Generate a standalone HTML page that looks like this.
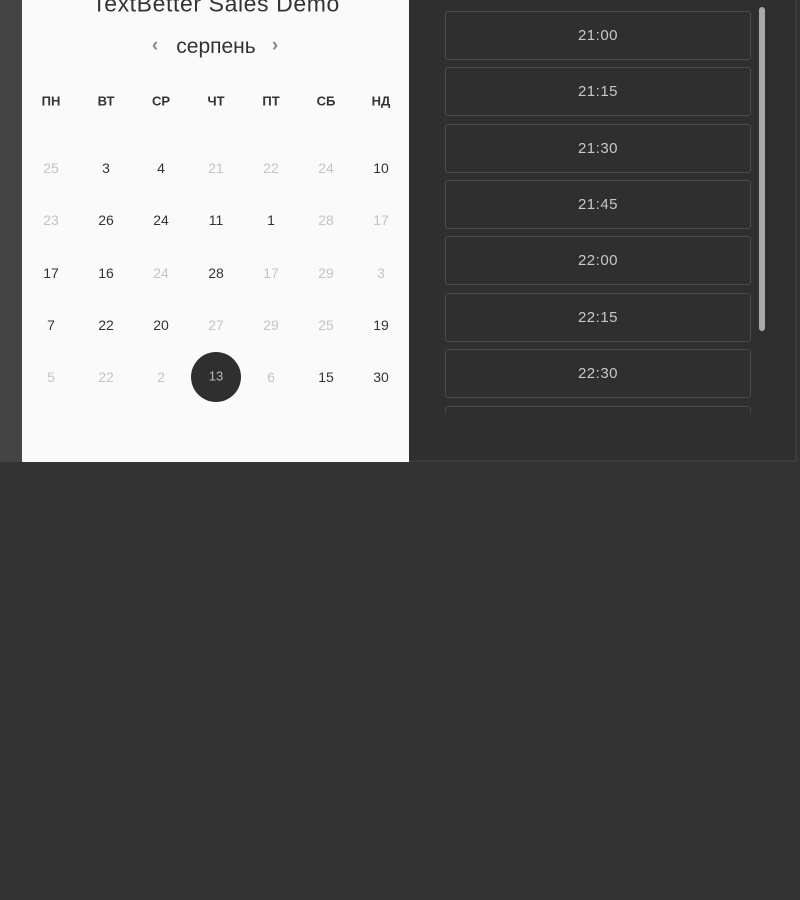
<!DOCTYPE html>
<html><head><meta charset="utf-8"><style>
*{margin:0;padding:0;box-sizing:border-box}
html,body{width:800px;height:900px;background:#333;overflow:hidden;font-family:"Liberation Sans",sans-serif}
.strip{position:absolute;left:0;top:0;width:22px;height:462px;background:#444}
.cal{position:absolute;left:22px;top:0;width:387px;height:462px;background:#fafafa}
.right{position:absolute;left:409px;top:0;width:388px;height:462px;background:#2f2f2f;border-right:2px solid #3a3a3a;border-bottom:2px solid #3a3a3a}
.t{position:absolute;transform:translate(-50%,-50%);white-space:nowrap}
.title{left:216px;top:4px;font-size:23px;color:#333;letter-spacing:.6px}
.month{left:216px;top:47px;font-size:21px;color:#333}
.arr{font-size:19px;color:#888;font-weight:bold}
.wd{font-size:13px;font-weight:bold;color:#333;top:101px}
.d{font-size:14px;color:#333}
.g{color:#c4c4c4}
.sel{position:absolute;left:191px;top:352px;width:50px;height:50px;border-radius:50%;background:#2f2f2f}
.btn{position:absolute;left:445px;width:306px;height:49px;border:1px solid #4a4a4a;border-radius:3px;color:#c8c8c8;font-size:15px;text-align:center;line-height:47px;letter-spacing:.5px}
.sb{position:absolute;left:759px;top:7px;width:6px;height:324px;border-radius:3px;background:#a8a8a8}
.clip{position:absolute;left:440px;top:0;width:320px;height:413px;overflow:hidden}
</style></head><body>
<div class="strip"></div>
<div class="cal"></div>
<div class="right"></div>
<div class="t title">TextBetter Sales Demo</div>
<div class="t arr" style="left:155px;top:46px">‹</div>
<div class="t month">серпень</div>
<div class="t arr" style="left:275px;top:46px">›</div>
<div class="t wd" style="left:51px">ПН</div>
<div class="t wd" style="left:106px">ВТ</div>
<div class="t wd" style="left:161px">СР</div>
<div class="t wd" style="left:216px">ЧТ</div>
<div class="t wd" style="left:271px">ПТ</div>
<div class="t wd" style="left:326px">СБ</div>
<div class="t wd" style="left:381px">НД</div>
<div class="sel"></div>
<div class="t d g" style="left:51px;top:168px">25</div><div class="t d" style="left:106px;top:168px">3</div><div class="t d" style="left:161px;top:168px">4</div><div class="t d g" style="left:216px;top:168px">21</div><div class="t d g" style="left:271px;top:168px">22</div><div class="t d g" style="left:326px;top:168px">24</div><div class="t d" style="left:381px;top:168px">10</div>
<div class="t d g" style="left:51px;top:220px">23</div><div class="t d" style="left:106px;top:220px">26</div><div class="t d" style="left:161px;top:220px">24</div><div class="t d" style="left:216px;top:220px">11</div><div class="t d" style="left:271px;top:220px">1</div><div class="t d g" style="left:326px;top:220px">28</div><div class="t d g" style="left:381px;top:220px">17</div>
<div class="t d" style="left:51px;top:273px">17</div><div class="t d" style="left:106px;top:273px">16</div><div class="t d g" style="left:161px;top:273px">24</div><div class="t d" style="left:216px;top:273px">28</div><div class="t d g" style="left:271px;top:273px">17</div><div class="t d g" style="left:326px;top:273px">29</div><div class="t d g" style="left:381px;top:273px">3</div>
<div class="t d" style="left:51px;top:325px">7</div><div class="t d" style="left:106px;top:325px">22</div><div class="t d" style="left:161px;top:325px">20</div><div class="t d g" style="left:216px;top:325px">27</div><div class="t d g" style="left:271px;top:325px">29</div><div class="t d g" style="left:326px;top:325px">25</div><div class="t d" style="left:381px;top:325px">19</div>
<div class="t d g" style="left:51px;top:377px">5</div><div class="t d g" style="left:106px;top:377px">22</div><div class="t d g" style="left:161px;top:377px">2</div><div class="t d" style="left:216px;top:376px;color:#bbb;font-size:13px">13</div><div class="t d g" style="left:271px;top:377px">6</div><div class="t d" style="left:326px;top:377px">15</div><div class="t d" style="left:381px;top:377px">30</div>
<div class="clip">
<div class="btn" style="left:5px;top:11px">21:00</div>
<div class="btn" style="left:5px;top:67px">21:15</div>
<div class="btn" style="left:5px;top:124px">21:30</div>
<div class="btn" style="left:5px;top:180px">21:45</div>
<div class="btn" style="left:5px;top:236px">22:00</div>
<div class="btn" style="left:5px;top:293px">22:15</div>
<div class="btn" style="left:5px;top:349px">22:30</div>
<div class="btn" style="left:5px;top:406px">22:45</div>
</div>
<div class="sb"></div>
</body></html>
